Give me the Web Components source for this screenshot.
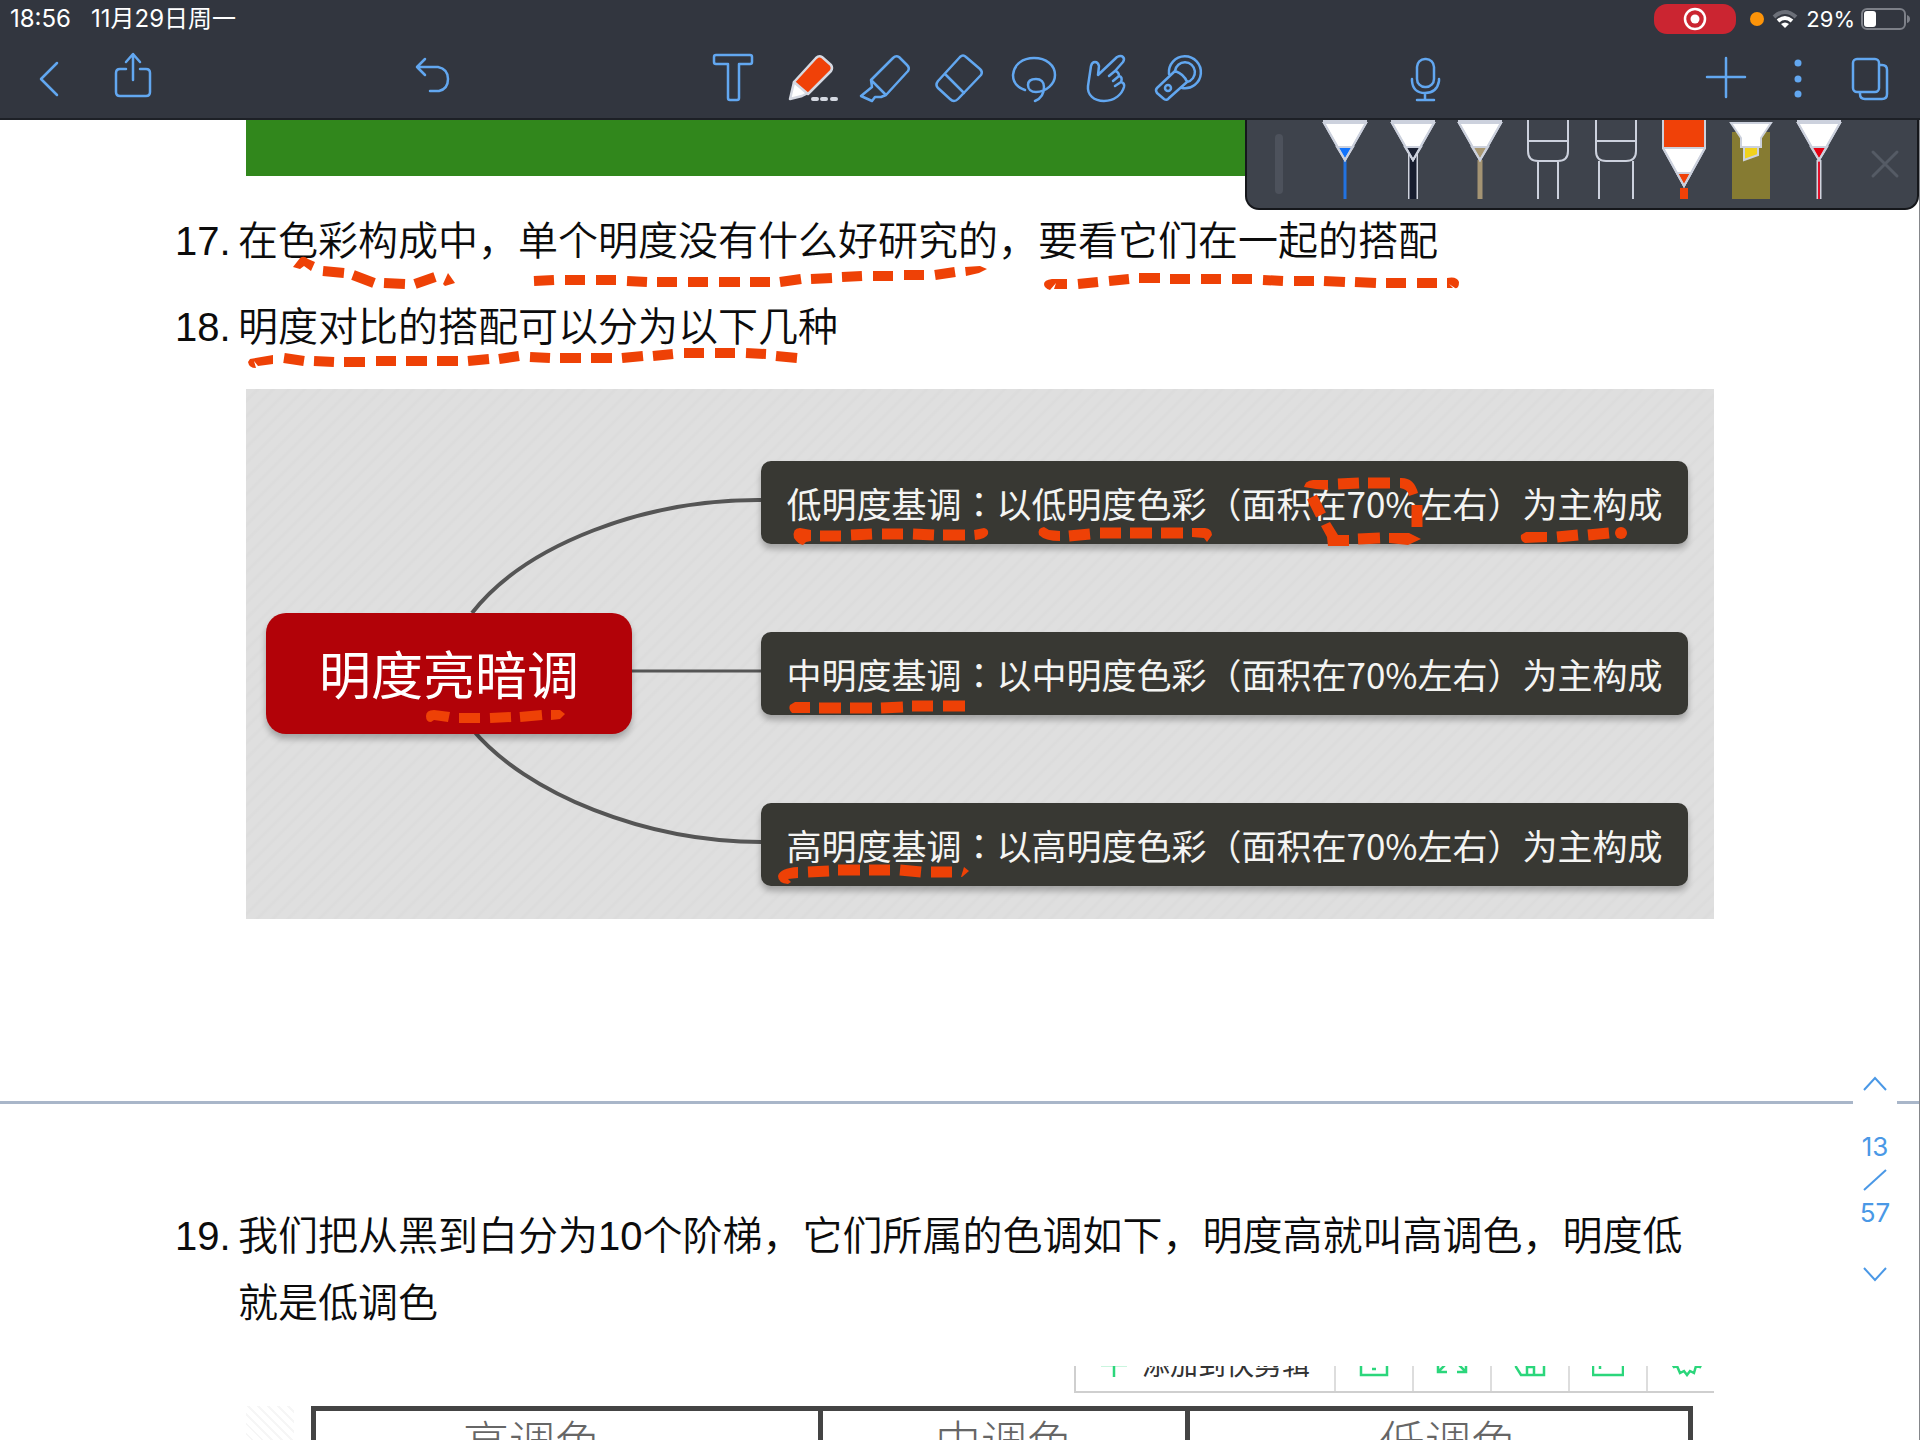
<!DOCTYPE html>
<html lang="zh-CN">
<head>
<meta charset="utf-8">
<title>色彩构成笔记</title>
<style>
html,body{margin:0;height:100%}
body{font-family:"Liberation Sans","Noto Sans CJK SC",sans-serif;background:#fff;color:#0c0c0c}
</style>
</head>
<body>
<note-app></note-app>
<script>
const define = (name, css, html) => {
  const tpl = document.createElement('template');
  tpl.innerHTML = `<style>*{box-sizing:border-box}${css}</style>${html}`;
  customElements.define(name, class extends HTMLElement {
    constructor() {
      super();
      this.attachShadow({ mode: 'open' }).append(tpl.content.cloneNode(true));
    }
  });
};

/* Toolbar glyphs: [viewBox, markup], drawn on one shared toolbar grid */
const ICONS = {
  back: ['12 38 74 79', '<path d="M57 63L41 79L57 95"/>'],
  share: ['96 38 74 79', '<path d="M126 69h-6q-4 0-4 4v19q0 4 4 4h26q4 0 4-4v-19q0-4-4-4h-6M133 80V55M126 62l7-8 7 8"/>'],
  undo: ['395 38 74 79', '<path d="M425 59l-8 8 8 8M417 67h21q10 2 10 12t-9 12h-9"/>'],
  text: ['695 38 74 79', '<path d="M715 55h34q2 0 2 2v5q0 2-2 2h-11v34q0 2-2 2h-7q-2 0-2-2V64h-12q-2 0-2-2v-5q0-2 2-2z"/>'],
  pen: ['769 38 74 79', '<path d="M793 82L789 99L801 96L807 93z" fill="#fff" stroke="#d5d9e2"/><path d="M793 82L815 58Q818 55 821 57L830 65Q832 68 830 71L807 94z" fill="#f04108" stroke="#d5d9e2"/><path d="M812 99h4M821 99h4M831 99h4" stroke="#d5d9e2" stroke-width="4"/>'],
  marker: ['843 38 74 79', '<path d="M870 80L892 58Q895 55 898 57L906 65Q909 68 907 71L885 95zM870 80l1 7-11 9 11 5 3-4h6l5-2"/>'],
  eraser: ['917 38 74 79', '<path d="M959 57Q962 54 965 57L979 69Q982 72 980 75L957 99Q953 103 949 99L937 88Q934 85 937 81zM944 74L963 93"/>'],
  lasso: ['991 38 74 79', '<path d="M1024 90C1015 87 1012 81 1012 75C1013 64 1022 58 1033 58C1045 58 1054 65 1054 75C1054 84 1045 92 1035 92C1030 92 1027 89 1027 85C1027 81 1030 79 1035 79C1040 79 1043 82 1043 87C1043 94 1039 99 1034 101"/>'],
  hand: ['1065 38 74 79', '<path d="M1097 75L1098 66Q1097 62 1094 62T1090 66L1087 86C1086 95 1093 101 1103 101C1114 101 1121 94 1123 87Q1124 83 1120 82Q1122 77 1118 76Q1118 72 1114 71L1122 62Q1124 59 1122 57T1116 57zM1114 71l-6 5M1118 76l-6 5M1120 82l-6 4"/>'],
  laser: ['1139 38 74 79', '<path d="M1168 74A16 16 0 1 1 1181 88M1174 71A10 10 0 1 1 1186 82M1174 71L1156 88Q1154 90 1156 93L1163 99Q1166 101 1168 98L1186 82Q1183 74 1174 71"/><circle cx="1167" cy="88" r="3"/>'],
  mic: ['1388 38 74 79', '<rect x="1416" y="59" width="17" height="28" rx="8"/><path d="M1411 79v2q1 12 13 12t14-12v-2M1424 93v6M1416 100h17"/>'],
  plus: ['1690 38 72 79', '<path d="M1707 77h38M1726 58v39"/>'],
  more: ['1762 38 72 79', '<g fill="currentColor" stroke="none"><circle cx="1798" cy="63" r="3.5"/><circle cx="1798" cy="79" r="3.5"/><circle cx="1798" cy="94" r="3.5"/></g>'],
  pages: ['1834 38 72 79', '<rect x="1853" y="59" width="26" height="33" rx="4"/><path d="M1880 65h2q5 0 5 5v24q0 5-5 5h-17q-5 0-5-5v-1"/>']
};

customElements.define('tool-button', class extends HTMLElement {
  connectedCallback() {
    const [box, art] = ICONS[this.getAttribute('icon')];
    const [, , w, h] = box.split(' ');
    this.attachShadow({ mode: 'open' }).innerHTML = `<style>
      :host{display:block}
      button{display:block;padding:0;border:0;background:none;color:#62a7f0;cursor:pointer}
      svg{display:block;fill:none;stroke:currentColor;stroke-width:2.5;stroke-linecap:round;stroke-linejoin:round}
      </style><button type="button" aria-label="${this.getAttribute('label')}"><svg width="${w}" height="${h}" viewBox="${box}">${art}</svg></button>`;
  }
});

define('status-bar', `
  :host{display:flex;justify-content:space-between;align-items:center;height:38px;padding:0 10px;color:#fff;
    font:22px/28px Inter,"Noto Sans CJK SC",sans-serif}
  .l{display:flex;gap:20px;font-size:24px}
  .r{display:flex;align-items:center}
  .rec{display:flex;align-items:center;justify-content:center;width:82px;height:30px;border-radius:13px;background:#cb2531;margin-right:14px}
  .dot{width:14px;height:14px;border-radius:50%;background:#fd9409;margin-right:8px}
  .wifi{margin-right:8px}
  .pct{margin-right:6px}
  svg{display:block}`, `
  <div class="l"><span>18:56</span><span>11月29日周一</span></div>
  <div class="r">
    <span class="rec"><svg width="24" height="24" viewBox="0 0 24 24"><circle cx="12" cy="12" r="10" fill="none" stroke="#fff" stroke-width="2.5"/><circle cx="12" cy="12" r="4.5" fill="#fff"/></svg></span>
    <span class="dot"></span>
    <svg class="wifi" width="26" height="20" viewBox="0 0 26 20" fill="none" stroke-width="4"><path d="M2 8Q13-2 24 8" stroke="#6c7079"/><path d="M6 12Q13 6 20 12" stroke="#fff"/><path d="M13 19l-4-4q4-3 8 0z" fill="#fff"/></svg>
    <span class="pct">29%</span>
    <svg width="49" height="24" viewBox="0 0 49 24"><rect x="1" y="2" width="43" height="20" rx="5" fill="none" stroke="#7d8088" stroke-width="2"/><rect x="3" y="4" width="12" height="16" rx="3" fill="#fff"/><path d="M46 8q3 1 3 4t-3 4z" fill="#7d8088"/></svg>
  </div>`);

define('tool-bar', `
  :host{display:grid;grid-template-columns:158px 225fr 74px 226fr 518px 175fr 74px 227fr 216px;padding:0 14px 0 12px;
    height:82px;border-bottom:2px solid #1d2026}
  div{display:flex}
  .a{gap:10px;grid-column:1}.b{grid-column:3}.c{grid-column:5}.d{grid-column:7}.e{grid-column:9}`, `
  <div class="a"><tool-button icon="back" label="返回"></tool-button><tool-button icon="share" label="分享"></tool-button></div>
  <div class="b"><tool-button icon="undo" label="撤销"></tool-button></div>
  <div class="c"><tool-button icon="text" label="文本"></tool-button><tool-button icon="pen" label="钢笔"></tool-button><tool-button icon="marker" label="荧光笔"></tool-button><tool-button icon="eraser" label="橡皮"></tool-button><tool-button icon="lasso" label="套索"></tool-button><tool-button icon="hand" label="手势"></tool-button><tool-button icon="laser" label="激光笔"></tool-button></div>
  <div class="d"><tool-button icon="mic" label="录音"></tool-button></div>
  <div class="e"><tool-button icon="plus" label="添加"></tool-button><tool-button icon="more" label="更多"></tool-button><tool-button icon="pages" label="页面"></tool-button></div>`);

/* Pens in the tray hang from the top edge, each above a sample of its stroke */
const nib = (c, top) => `<path d="M-21-2h42v3h-42z" fill="${top}"/><path d="M-21 3H21L0 40z" fill="#fff"/><path d="M-8 27H8L0 40z" fill="${c}"/><path d="M-21 3H21L0 40z"/>`;
const rubber = d => `<path d="M-20-2V31q0 10 10 10H10q10 0 10-10V-2M-20 21H20M${-d} 41V79M${d} 41V79"/>`;
const PENS = [
  ['蓝色钢笔', `<path d="M0 40V79" stroke="#2273e0" stroke-width="3"/>` + nib('#1273fb', '#22304d')],
  ['黑色钢笔', `<path d="M0 34V79" stroke="#d0d4de" stroke-width="10"/><path d="M0 34V79" stroke="#171d2e" stroke-width="7"/>` + nib('#1b2133', '#0e1220')],
  ['棕色钢笔', `<path d="M0 40V79" stroke="#a49473" stroke-width="5"/>` + nib('#a99872', '#5a5650')],
  ['小橡皮', rubber(10)],
  ['大橡皮', rubber(17)],
  ['橙色虚线笔', `<path d="M0 68V79" stroke="#f04108" stroke-width="8"/><path d="M-21-2V28L0 66L21 28V-2z" fill="#fff"/><path d="M-21-2H21V28H-21z" fill="#f04108"/><path d="M-7 53H7L0 66z" fill="#f04108"/><path d="M-21-2V28L0 66L21 28V-2"/>`],
  ['黄色荧光笔', `<path d="M-19 12H19V79H-19z" fill="#867b32" stroke="none"/><path d="M-7 27V40L7 35V27z" fill="#f1d21c"/><path d="M-20 3H20L10 18V27H-10V18z" fill="#fff"/>`],
  ['红色钢笔', `<path d="M0 40V79" stroke="#d0d4de" stroke-width="5"/><path d="M0 40V79" stroke="#e0102a" stroke-width="2"/>` + nib('#e60012', '#4a1420')]
];
define('pen-tray', `
  :host{display:flex;width:674px;height:90px;background:#3e434c;border:solid #15171b;border-width:0 2px 2px;border-radius:0 0 14px 14px}
  .grip{width:64px;display:flex;align-items:center;justify-content:center}
  .grip i{width:8px;height:60px;border-radius:4px;background:#4d525c}
  .pens{flex:1;display:flex;justify-content:space-around}
  button{border:0;background:none;padding:0;display:block}
  svg{display:block;fill:none;stroke:#ccd1dd;stroke-width:2}
  .x{width:64px}
  .x svg{margin:auto;stroke:#555b65;stroke-width:3;stroke-linecap:round}`, `
  <div class="grip"><i></i></div>
  <div class="pens">${PENS.map(([l, a]) => `<button type="button" aria-label="${l}"><svg width="60" height="88" viewBox="-30 0 60 88">${a}</svg></button>`).join('')}</div>
  <button class="x" type="button" aria-label="关闭"><svg width="30" height="30" viewBox="0 0 30 30"><path d="M3 3L27 27M27 3L3 27"/></svg></button>`);

define('note-item', `
  :host{display:grid;grid-template-columns:63px 1fr;font-size:40px;line-height:67px;font-weight:350}`, `
  <slot name="n"></slot><div><slot></slot></div>`);

define('mind-node', `
  :host{display:flex;align-items:center;justify-content:center;white-space:nowrap;height:83px;border-radius:10px;
    background:#383833;color:#f4f4f2;font:35px/48px "Noto Sans CJK SC",sans-serif;box-shadow:0 5px 6px #0004}
  :host([root]){width:366px;height:121px;border-radius:20px;background:#b20208;color:#fff;font-size:52px;line-height:70px}`, `
  <span><slot></slot></span>`);

define('mind-map', `
  :host{position:relative;display:flex;justify-content:space-between;align-items:center;height:530px;padding:0 26px 0 20px;
    background:repeating-linear-gradient(135deg,#dfdfdf 0 6px,#dcdcdc 8px 9px,#dfdfdf 11px)}
  svg{position:absolute;left:0;top:0;fill:none;stroke:#555;stroke-width:4}
  mind-node{position:relative;margin-top:38px}
  .k{width:927px;display:flex;flex-direction:column;gap:88px;margin-top:39px}
  .k mind-node{margin:0}
  b{font-weight:inherit;font-family:"Noto Sans CJK TC",sans-serif}`, `
  <svg width="520" height="530" viewBox="0 0 520 530" aria-hidden="true"><path d="M226 224C280 155 400 110 516 111M226 340C280 405 400 453 516 453"/><path d="M380 282H516" stroke-width="3"/></svg>
  <mind-node root>明度亮暗调</mind-node>
  <div class="k">
    <mind-node>低明度基调<b lang="zh-TW">：</b>以低明度色彩（面积在70%左右）为主构成</mind-node>
    <mind-node>中明度基调<b lang="zh-TW">：</b>以中明度色彩（面积在70%左右）为主构成</mind-node>
    <mind-node>高明度基调<b lang="zh-TW">：</b>以高明度色彩（面积在70%左右）为主构成</mind-node>
  </div>`);

define('clip-bar', `
  :host{display:flex;width:640px;height:27px;overflow:hidden;border:solid #cfcfcf;border-width:0 0 2px 2px;color:#333;
    font:28px/36px "Noto Sans CJK SC",sans-serif;align-items:flex-end}
  button{flex:none;display:flex;align-items:flex-end;justify-content:center;height:48px;width:78px;padding:0 0 14px;border:0;border-left:2px solid #ddd;background:none;font:inherit;color:inherit}
  .add{width:258px;border:0;gap:14px;padding-bottom:10px}
  svg{display:block;fill:none;stroke:#2bd67b;stroke-width:2.5;flex:none}`, `
  <button class="add" type="button"><svg width="28" height="28" viewBox="0 0 28 28"><path d="M14 0V24M1 12H27"/></svg>添加到快剪辑</button>
  <button type="button" aria-label="保存"><svg width="30" height="30" viewBox="0 0 30 30"><path d="M2 2H28V28H2zM6 15H24M13 22h4"/></svg></button>
  <button type="button" aria-label="全屏"><svg width="32" height="30" viewBox="0 0 32 30"><path d="M2 16V25H11M2 25L13 14M30 16V25H21M30 25L19 14"/></svg></button>
  <button type="button" aria-label="画中画"><svg width="32" height="30" viewBox="0 0 32 30"><path d="M2 4V20L7 28H30V4M13 28V20H20V28"/></svg></button>
  <button type="button" aria-label="窗口"><svg width="32" height="30" viewBox="0 0 32 30"><path d="M1 2H31V28H1zM8 16v6"/></svg></button>
  <button type="button" aria-label="设置"><svg width="32" height="30" viewBox="0 0 32 30"><path d="M0 14l4 6 3-1 3 7 4-2 3 4 3-4 4 2 2-7 4 1 3-6"/></svg></button>`);

define('tone-table', `
  :host{display:block;background:repeating-linear-gradient(45deg,#fff 0 5px,#f6f6f6 5px 7px) left/48px 100% no-repeat;padding-left:65px}
  table{width:1382px;border-collapse:collapse;table-layout:fixed;background:#fff}
  th{border:5px solid #444;height:120px;padding:0;vertical-align:top;font:300 46px/56px "Noto Sans CJK SC",sans-serif;color:#666}
  th:nth-child(1){width:507px;padding-right:70px}th:nth-child(2){width:367px}th:nth-child(3){padding-left:18px}`, `
  <table><tr><th scope="col">高调色</th><th scope="col">中调色</th><th scope="col">低调色</th></tr></table>`);

define('page-nav', `
  :host{display:flex;flex-direction:column;align-items:center;width:44px;background:#fff;color:#4a98e6;
    font:26px/36px Inter,"Liberation Sans",sans-serif}
  button{border:0;background:none;padding:0;display:block;color:inherit}
  svg{display:block;fill:none;stroke:currentColor;stroke-width:2}
  .up{margin-bottom:35px}.dn{margin-top:33px}
  .sl{margin:4px 0}`, `
  <button class="up" type="button" aria-label="上一页"><svg width="26" height="20" viewBox="0 0 26 20"><path d="M2 16L13 4L24 16"/></svg></button>
  <span>13</span>
  <svg class="sl" width="24" height="22" viewBox="0 0 24 22"><path d="M1 21L23 1"/></svg>
  <span>57</span>
  <button class="dn" type="button" aria-label="下一页"><svg width="26" height="20" viewBox="0 0 26 20"><path d="M2 4L13 16L24 4"/></svg></button>`);

/* Dashes of the orange pen: x1,y1,x2,y2 */
const thin = `323,271,344,273 353,275,374,283 384,283,405,284 415,284,435,277
534,281,554,280 565,280,585,280 596,280,616,280 627,281,647,282 657,282,677,282 688,282,708,282 719,282,740,282 750,282,770,282 780,282,801,279 811,279,832,278 842,277,862,276 873,276,893,276 904,275,924,275 935,275,955,272
1078,284,1098,282 1109,281,1129,279 1139,278,1160,278 1170,279,1190,279 1201,279,1221,279 1232,279,1252,279 1263,280,1283,281 1294,281,1314,281 1324,281,1345,282 1355,282,1376,283 1386,283,1406,283 1417,283,1437,283
284,358,304,361 314,361,334,362 344,362,365,362 376,361,396,361 406,361,427,361 437,361,458,361 468,361,489,359 499,359,519,356 530,357,550,358 560,358,581,358 591,358,612,358 622,358,643,356 653,356,673,354 684,353,704,353 715,353,735,353 746,353,766,354 776,356,797,358
459,718,480,718 490,718,511,717 520,717,542,715`;
const thick = `820,536,841,536 851,535,872,534 882,534,903,534 913,534,934,535 943,535,965,535
1069,536,1090,534 1100,533,1121,533 1130,533,1152,533 1161,533,1183,533
1338,484,1359,483 1368,483,1390,483 1417,505,1417,527 1312,497,1321,515 1358,539,1380,538 1557,537,1578,535 1588,535,1609,533
819,708,841,708 850,708,872,708 881,708,903,707 912,706,933,706 943,706,965,706
808,872,829,871 838,870,860,870 869,870,890,870 900,870,921,872 931,872,952,872`;
const dashes = s => s.trim().split(/\s+/).map(d => { const [a, b, c, e] = d.split(','); return `M${a} ${b}L${c} ${e}`; }).join('');
define('ink-layer', `
  :host{position:absolute;left:0;top:0;pointer-events:none}
  svg{display:block;fill:none;stroke:#ee4106}`, `
  <svg width="1920" height="900" viewBox="0 120 1920 900" aria-hidden="true">
    <path stroke-width="10" d="${dashes(thin)}"/>
    <path stroke-width="11" d="${dashes(thick)}"/>
    <g fill="#ee4106" stroke="none">
      <path d="M293 267L300 258Q304 255 308 259L315 262 311 271 304 266 300 269z"/>
      <path d="M443 284L448 273 455 283 445 286z"/>
      <path d="M965 267L980 266 987 269 979 273 966 276z"/>
      <path d="M1067 279V289H1054L1056 283 1050 290Q1044 288 1044 284T1052 279z"/>
      <path d="M1447 278Q1457 276 1459 282Q1459 289 1455 288L1449 284 1453 288H1447z"/>
      <path d="M250 359L273 355V364L258 366 254 361 256 368Q249 368 248 362z"/>
      <path d="M450 712L448 722 434 720 431 722Q426 722 426 716T434 710z"/>
      <path d="M551 710L560 710 565 714 560 719 551 720z"/>
      <path d="M811 530V541L806 542 803 545Q798 544 794 538Q792 528 800 528z"/>
      <path d="M974 530L984 528Q989 529 988 534Q986 539 975 540z"/>
      <path d="M1060 531V541Q1045 541 1039 535Q1037 528 1044 527L1049 530z"/>
      <path d="M1192 528L1205 528Q1212 529 1212 535L1207 542 1204 538 1192 537z"/>
      <path d="M1328 480V490L1316 489 1304 487Q1305 481 1313 480z"/>
      <path d="M1400 478Q1414 477 1418 493L1409 496Q1408 489 1400 488z"/>
      <path d="M1321 526L1330 522 1338 535 1349 535V546H1328L1327 537z"/>
      <path d="M1389 533L1409 533 1421 539 1408 545 1389 543z"/>
      <path d="M1547 532V542L1525 543Q1520 541 1521 535L1526 532z"/>
      <circle cx="1621" cy="533" r="6"/>
      <path d="M810 702V713L792 713Q788 709 790 705L795 702z"/>
      <path d="M798 867V878L788 879 791 882 788 884Q778 883 778 876Q780 868 798 867z"/>
      <path d="M961 877L964 867 969 871 962 877z"/>
    </g>
  </svg>`);

define('note-app', `
  :host{display:flex;flex-direction:column;height:100vh;overflow:hidden}
  header{flex:none;background:#32363f}
  main{position:relative;flex:1;min-height:0;overflow:hidden;border-right:1px solid #85878b}
  section{padding:0 205px 0 246px}
  section.one{height:984px;border-bottom:3px solid #a9b6c9}
  .two{padding-top:99px}
  .green{height:56px;background:#31871c}
  note-item{margin-left:-71px}
  .i17{margin-top:32px}.i18{margin-top:19px}
  mind-map{margin-top:28px}
  clip-bar{margin:29px 0 13px auto}
  pen-tray{position:absolute;right:0;top:0}
  page-nav{position:absolute;right:22px;top:954px}`, `
  <header><status-bar></status-bar><tool-bar></tool-bar></header>
  <main>
    <section class="one">
      <div class="green"></div>
      <note-item class="i17"><span slot="n">17.</span>在色彩构成中，单个明度没有什么好研究的，要看它们在一起的搭配</note-item>
      <note-item class="i18"><span slot="n">18.</span>明度对比的搭配可以分为以下几种</note-item>
      <mind-map></mind-map>
    </section>
    <section class="two">
      <note-item><span slot="n">19.</span>我们把从黑到白分为10个阶梯，它们所属的色调如下，明度高就叫高调色，明度低就是低调色</note-item>
      <clip-bar></clip-bar>
      <tone-table></tone-table>
    </section>
    <ink-layer></ink-layer>
    <page-nav></page-nav>
    <pen-tray></pen-tray>
  </main>`);
</script>
</body>
</html>
